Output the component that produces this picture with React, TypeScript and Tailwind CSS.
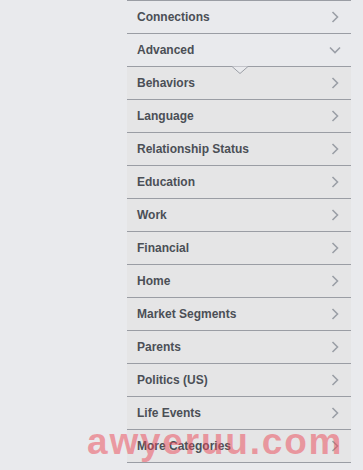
import React from "react";

const items = [
  "Connections",
  "Advanced",
  "Behaviors",
  "Language",
  "Relationship Status",
  "Education",
  "Work",
  "Financial",
  "Home",
  "Market Segments",
  "Parents",
  "Politics (US)",
  "Life Events",
  "More Categories",
];

function ChevronRight() {
  return (
    <svg width="8" height="12" viewBox="0 0 8 12" className="shrink-0">
      <path d="M1.5 1 L6.5 6 L1.5 11" fill="none" stroke="#9b9fa7" strokeWidth="1.6" />
    </svg>
  );
}

function ChevronDown() {
  return (
    <svg width="12" height="8" viewBox="0 0 12 8" className="shrink-0">
      <path d="M1 1.5 L6 6.5 L11 1.5" fill="none" stroke="#9b9fa7" strokeWidth="1.6" />
    </svg>
  );
}

export default function App() {
  return (
    <div className="relative w-[363px] h-[470px] bg-[#e9eaed] overflow-hidden" style={{ fontFamily: '"Liberation Sans", Arial, sans-serif' }}>
      <div className="ml-[127px] w-[224px] flex flex-col border-b border-[#9a9da4]">
        {items.map((label, i) => {
          const open = i === 1;
          const light = i < 2;
          return (
            <div
              key={label}
              className={`relative h-[33px] border-t border-[#9a9da4] flex items-center justify-between pl-[10px] pr-[12px] ${light ? "bg-[#e9eaed]" : "bg-[#e5e5e6]"}`}
            >
              <span className="text-[12px] font-bold text-[#4b4f56]">{label}</span>
              {open ? (
                <span className="mr-[-2px]"><ChevronDown /></span>
              ) : (
                <ChevronRight />
              )}
              {i === 2 && (
                <svg width="20" height="9" viewBox="0 0 20 9" className="absolute left-[103px] top-[-1px]">
                  <path d="M0 0.5 L10 0.5 L19 0.5 L10 8 Z" fill="#e9eaed" stroke="none" />
                  <path d="M0 0.5 L2 0.5 L10 7.5 L18 0.5 L20 0.5" fill="none" stroke="#9a9da4" strokeWidth="1" />
                </svg>
              )}
            </div>
          );
        })}
      </div>
      <div
        className="absolute left-[87px] top-[423px] text-[37px] font-bold tracking-[1.8px] leading-none pointer-events-none text-[rgba(236,72,86,0.5)]"
        style={{ fontFamily: '"Liberation Sans", Arial, sans-serif' }}
      >
        awyeruu.com
      </div>
    </div>
  );
}
